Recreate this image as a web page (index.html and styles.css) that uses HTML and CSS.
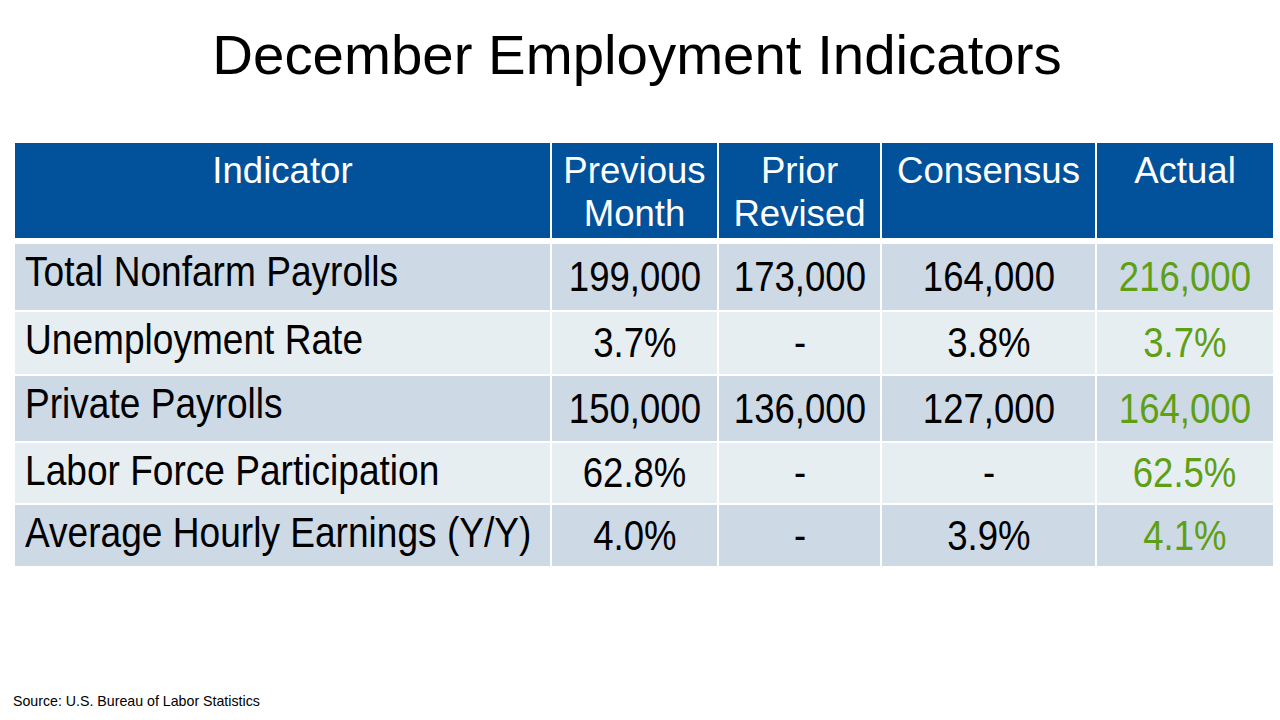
FILE: index.html
```html
<!DOCTYPE html>
<html lang="en">
<head>
<meta charset="utf-8">
<title>December Employment Indicators</title>
<link rel="stylesheet" href="styles.css">
</head>
<body>
  <h1 class="title">December Employment Indicators</h1>
  <div class="table">
    <div class="row head">
      <div class="hcell">Indicator</div>
      <div class="hcell">Previous<br>Month</div>
      <div class="hcell">Prior<br>Revised</div>
      <div class="hcell">Consensus</div>
      <div class="hcell">Actual</div>
    </div>
    <div class="row dark r1">
      <div class="lcell"><span class="t">Total Nonfarm Payrolls</span></div>
      <div class="vcell"><span class="t">199,000</span></div>
      <div class="vcell"><span class="t">173,000</span></div>
      <div class="vcell"><span class="t">164,000</span></div>
      <div class="vcell green"><span class="t">216,000</span></div>
    </div>
    <div class="row light r2">
      <div class="lcell"><span class="t">Unemployment Rate</span></div>
      <div class="vcell"><span class="t">3.7%</span></div>
      <div class="vcell"><span class="t">-</span></div>
      <div class="vcell"><span class="t">3.8%</span></div>
      <div class="vcell green"><span class="t">3.7%</span></div>
    </div>
    <div class="row dark r3">
      <div class="lcell"><span class="t">Private Payrolls</span></div>
      <div class="vcell"><span class="t">150,000</span></div>
      <div class="vcell"><span class="t">136,000</span></div>
      <div class="vcell"><span class="t">127,000</span></div>
      <div class="vcell green"><span class="t">164,000</span></div>
    </div>
    <div class="row light r4">
      <div class="lcell"><span class="t">Labor Force Participation</span></div>
      <div class="vcell"><span class="t">62.8%</span></div>
      <div class="vcell"><span class="t">-</span></div>
      <div class="vcell"><span class="t">-</span></div>
      <div class="vcell green"><span class="t">62.5%</span></div>
    </div>
    <div class="row dark r5">
      <div class="lcell"><span class="t">Average Hourly Earnings (Y/Y)</span></div>
      <div class="vcell"><span class="t">4.0%</span></div>
      <div class="vcell"><span class="t">-</span></div>
      <div class="vcell"><span class="t">3.9%</span></div>
      <div class="vcell green"><span class="t">4.1%</span></div>
    </div>
  </div>
  <div class="source">Source: U.S. Bureau of Labor Statistics</div>
</body>
</html>
```
FILE: styles.css
```css
* {
  box-sizing: border-box;
}

html, body {
  margin: 0;
  padding: 0;
}

body {
  width: 1280px;
  height: 720px;
  overflow: hidden;
  background: #ffffff;
  display: flex;
  flex-direction: column;
  font-family: "Liberation Sans", Arial, sans-serif;
  color: #000000;
}

.title {
  margin: 22px 0 0 0;
  padding-right: 6px;
  font-size: 56.4px;
  line-height: 65px;
  font-weight: normal;
  text-align: center;
}

.table {
  margin: 56px 0 0 15px;
  width: 1258px;
  display: flex;
  flex-direction: column;
  gap: 2px;
  background: #ffffff;
}

.row {
  display: grid;
  grid-template-columns: 535px 165px 161px 213px 176px;
  column-gap: 2px;
}

.head {
  height: 95px;
  margin-bottom: 4px;
}

.hcell {
  background: #02529b;
  color: #ffffff;
  font-size: 36.6px;
  line-height: 43px;
  padding-top: 6px;
  text-align: center;
}

.r1 { height: 66px; }
.r2 { height: 62px; }
.r3 { height: 65px; }
.r4 { height: 60px; }
.r5 { height: 61px; }

.dark > div {
  background: #cdd9e5;
}

.light > div {
  background: #e7eef2;
}

.lcell {
  padding: 4px 0 0 10px;
  font-size: 42px;
  line-height: 48px;
  white-space: nowrap;
  overflow: hidden;
}

.vcell {
  display: flex;
  align-items: center;
  justify-content: center;
  font-size: 42px;
  line-height: 48px;
  white-space: nowrap;
}

.t {
  display: inline-block;
  white-space: nowrap;
  transform: scaleX(0.87);
}

.lcell .t {
  transform: scaleX(0.883);
  transform-origin: left center;
}

.vcell .t {
  transform-origin: center center;
}

.green {
  color: #5e9f16;
}

.source {
  margin-top: auto;
  padding: 0 0 11px 13px;
  font-size: 14.2px;
  line-height: 16px;
}
```
